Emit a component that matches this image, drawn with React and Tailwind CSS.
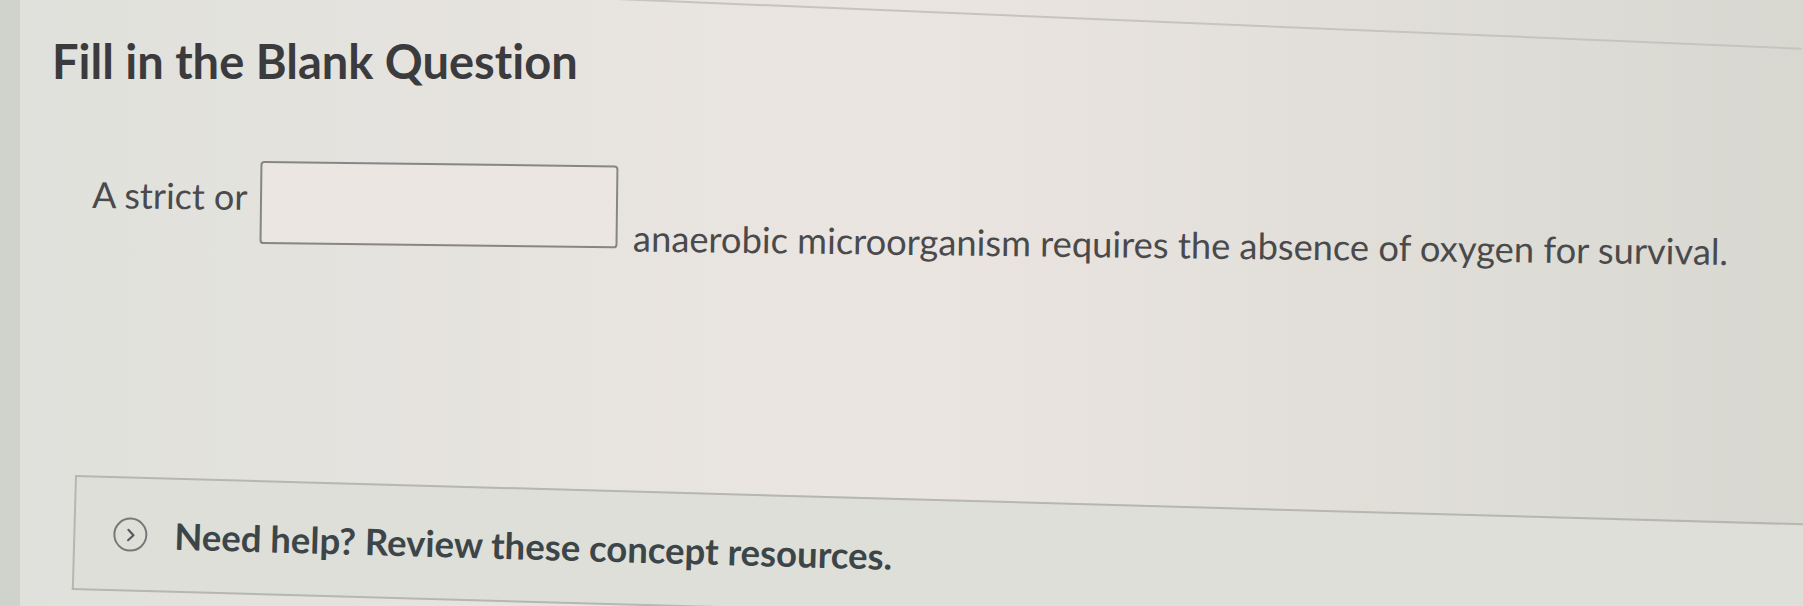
import { ChevronRight } from 'lucide-react';

function HelpBox() {
  // the photo shows this panel at a slight tilt
  return (
    <div className="ml-[55px] mr-[-60px] mt-[233px] origin-top-left rotate-[1.6deg] border-2 border-r-0 border-[#b6b7b1] bg-[#dfdfda] pt-[38px] pb-[36px] pl-[38px]">
      <div className="flex items-center">
        <span className="flex h-[34px] w-[34px] shrink-0 items-center justify-center rounded-full border-2 border-[#757877]">
          <ChevronRight className="h-[21px] w-[21px] text-[#555858]" strokeWidth={2.4} />
        </span>
        <span className="ml-[27px] whitespace-nowrap text-[36.5px] font-bold leading-none text-[#3c4648]">
          Need help? Review these concept resources.
        </span>
      </div>
    </div>
  );
}

export default function App() {
  return (
    <div
      className="flex h-[606px] w-[1803px] overflow-hidden bg-gradient-to-r from-[#e0e1dc] via-[#ebe5e1] to-[#d8d8d1] text-[#4a4a4c] [font-variant-ligatures:none]"
      style={{ fontFamily: 'Lato, "Open Sans", Arial, sans-serif' }}
    >
      {/* left edge of the window */}
      <div className="w-[20px] shrink-0 bg-[#d0d2cc]" />

      <div className="flex min-w-0 flex-1 flex-col">
        {/* header rule, slanted in the photo */}
        <div className="-mt-[27px] h-0 origin-left rotate-[2.4deg] border-t-2 border-[#c5c4bf]" />

        <h1 className="ml-[32px] mt-[63px] text-[47px] font-bold leading-none text-[#3b3b3e]">
          Fill in the Blank Question
        </h1>

        <div className="ml-[72px] mt-[74px] flex origin-left rotate-[0.7deg] items-start">
          <span className="mt-[17px] text-[36px] leading-none">A strict or</span>
          <span className="ml-[13px] h-[83px] w-[358px] shrink-0 rounded-[4px] border-2 border-[#868686] bg-[#ebe6e2]" />
          <span className="-mb-[7px] ml-[15px] self-end whitespace-nowrap text-[36.3px] leading-none">
            anaerobic microorganism requires the absence of oxygen for survival.
          </span>
        </div>

        <HelpBox />
      </div>
    </div>
  );
}
